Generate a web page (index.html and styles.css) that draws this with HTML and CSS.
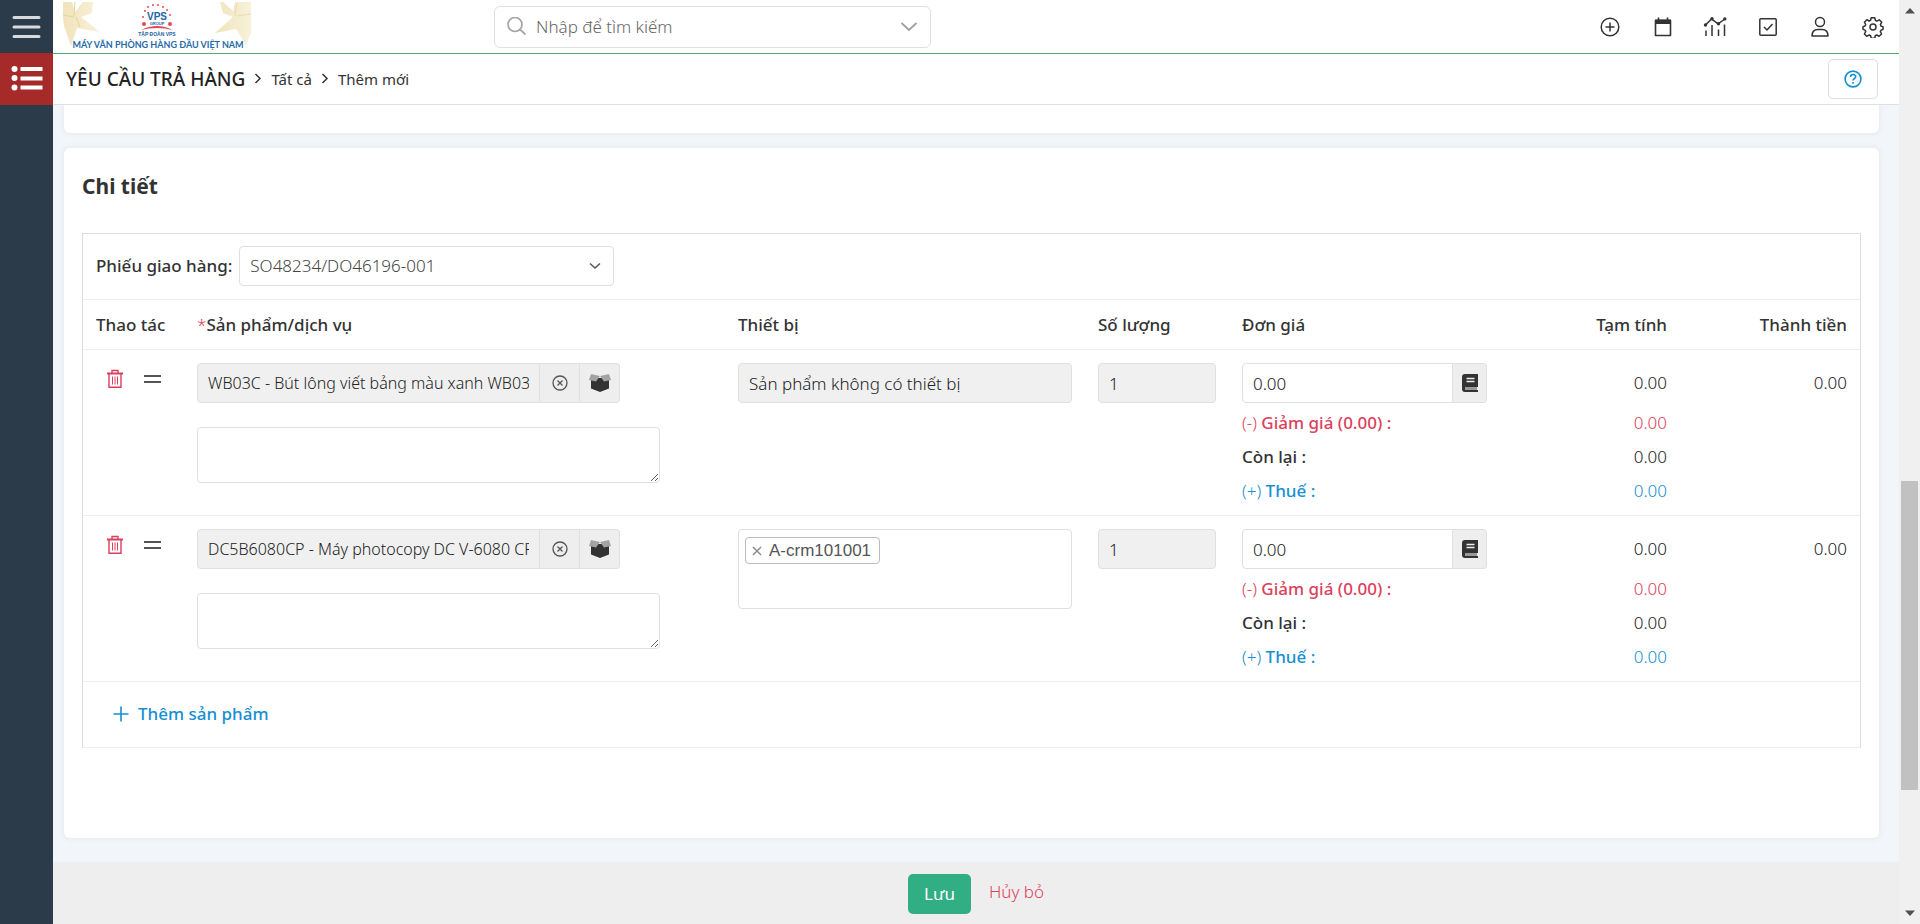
FILE: index.html
```html
<!DOCTYPE html>
<html lang="vi">
<head>
<meta charset="utf-8">
<title>Yêu cầu trả hàng</title>
<link rel="stylesheet" href="styles.css">
</head>
<body>
<div class="app">
  <nav class="sidebar" aria-label="Menu">
    <button class="side-btn" aria-label="Menu">
      <svg width="30" height="26" viewBox="0 0 30 26"><path d="M2 3.500h25M2 13h25M2 22.500h25" stroke="#d8dade" stroke-width="3" stroke-linecap="round"/></svg>
    </button>
    <button class="side-btn side-active" aria-label="Danh sách">
      <svg width="32" height="26" viewBox="0 0 32 26" fill="#fff"><circle cx="3.500" cy="3" r="3"/><circle cx="3.500" cy="12" r="3"/><circle cx="3.500" cy="21.500" r="3"/><path d="M9.500 1h22v4h-22zM9.500 10.500h22v4h-22zM9.500 19.500h22v4h-22z"/></svg>
    </button>
  </nav>

  <div class="page">
    <header class="topbar">
      <a class="logo" href="#" aria-label="VPS Group">
        <svg width="188" height="50" viewBox="0 0 188 50">
          <defs>
            <linearGradient id="petal" x1="0" y1="0" x2="1" y2="0"><stop offset="0" stop-color="#f1e3bb"/><stop offset="1" stop-color="#f8f1da"/></linearGradient>
          </defs>
          <g fill="url(#petal)">
            <path d="M0 0h9l3 10L20 0h10l-1 11-11 4 19 15-23-4-6 18-7-20-1-9z"/>
            <path d="M188 0h-16l-2 9-10-9h-3l3 11 10 4-18 16 21-4 10 16 5-12z"/>
          </g>
          <path d="M0 13l11 2M12 0l-1 14M13 15l4 10" stroke="#e4d3a0" fill="none"/>
          <path d="M188 12l-14 2M174 1l-2 13" stroke="#e9dcb2" fill="none"/>
          <g fill="#e04a55">
            <circle cx="81" cy="22" r="2"/><circle cx="80" cy="15" r="1"/><circle cx="82" cy="9" r="1"/><circle cx="85" cy="5" r="1"/><circle cx="90" cy="3" r="1"/><circle cx="95" cy="3" r="1"/><circle cx="100" cy="5" r="1"/><circle cx="104" cy="8" r="1"/><circle cx="107" cy="13" r="1"/><circle cx="107" cy="22" r="2"/>
            <path d="M78 28q16-8 32 0q-16-4-32 0z"/>
          </g>
          <text class="logo-vps" x="94" y="18" text-anchor="middle">VPS</text>
          <text class="logo-group" x="94" y="23" text-anchor="middle">GROUP</text>
          <text class="logo-sub" x="94" y="34" text-anchor="middle">TẬP ĐOÀN VPS</text>
          <text class="logo-line" x="95" y="46" text-anchor="middle">MÁY VĂN PHÒNG HÀNG ĐẦU VIỆT NAM</text>
        </svg>
      </a>
      <div class="search">
        <svg width="20" height="20" viewBox="0 0 20 20" fill="none" stroke="#a6a6a6" stroke-width="1.700"><circle cx="8" cy="7.500" r="7"/><path d="M13 12.500l5.500 5"/></svg>
        <input class="search-input" type="text" placeholder="Nhập để tìm kiếm" aria-label="Tìm kiếm">
        <svg width="18" height="10" viewBox="0 0 18 10" fill="none" stroke="#a0a0a0" stroke-width="1.800"><path d="M1.500 1L9 8l7.500-7"/></svg>
      </div>
      <div class="tools">
        <button class="tool" aria-label="Thêm"><svg width="22" height="22" viewBox="0 0 22 22" fill="none" stroke="#333" stroke-width="1.500"><circle cx="11" cy="11" r="8.800"/><path d="M11 6.500v9M6.500 11h9"/></svg></button>
        <button class="tool" aria-label="Lịch"><svg width="22" height="22" viewBox="0 0 22 22"><path d="M3.500 4.500h15v15h-15z" fill="none" stroke="#333" stroke-width="1.600" stroke-linejoin="round"/><path d="M3 3.500h16V8H3z" fill="#333"/><path d="M6.500 1.500v3M15.500 1.500v3" stroke="#333" stroke-width="1.600"/></svg></button>
        <button class="tool" aria-label="Báo cáo"><svg width="24" height="22" viewBox="0 0 24 22" fill="none" stroke="#333" stroke-width="1.500"><path d="M2 9.500L8.500 3l6.500 4.800L22 3"/><g fill="#333" stroke="none"><circle cx="2.500" cy="9" r="1.700"/><circle cx="9" cy="2.800" r="1.700"/><circle cx="15.500" cy="7.800" r="1.700"/><circle cx="21.800" cy="2.900" r="1.700"/></g><path d="M3 14.500V20M9 9v11M15.500 13.500V20M21.500 8.500V20"/></svg></button>
        <button class="tool" aria-label="Công việc"><svg width="22" height="22" viewBox="0 0 22 22" fill="none" stroke="#333" stroke-width="1.500"><rect x="2.800" y="2.800" width="16.400" height="16.400" rx="1"/><path d="M7 11l3 3 5.500-6"/></svg></button>
        <button class="tool" aria-label="Tài khoản"><svg width="22" height="22" viewBox="0 0 22 22" fill="none" stroke="#333" stroke-width="1.500"><circle cx="11" cy="6" r="4.500"/><path d="M3 20c0-4 2-6.500 6-6.500h4c4 0 6 2.500 6 6.500z" stroke-linejoin="round"/></svg></button>
        <button class="tool" aria-label="Cài đặt"><svg width="22" height="22" viewBox="0 0 22 22" fill="none" stroke="#333" stroke-width="1.500" stroke-linejoin="round"><circle cx="11" cy="11" r="3"/><path d="M9.200 1.800h3.600l.6 2.600 1.500.7 2.400-1.300 2.400 2.500-1.300 2.300.6 1.500 2 .7v2.600l-2 .8-.7 1.500 1.300 2.300-2.500 2.300-2.300-1.300-1.500.7-.6 2.500H9.300l-.7-2.500-1.500-.7-2.400 1.300-2.300-2.300 1.300-2.400-.7-1.500-2-.8v-2.600l2-.7.7-1.500-1.300-2.300 2.400-2.500 2.300 1.300 1.500-.7z"/></svg></button>
      </div>
    </header>

    <div class="crumbs">
      <h1 class="crumb-title">YÊU CẦU TRẢ HÀNG</h1>
      <svg class="sep" width="8" height="12" viewBox="0 0 8 12"><path d="M1.500 1L6 5.500 1.500 10"/></svg>
      <a class="crumb" href="#">Tất cả</a>
      <svg class="sep" width="8" height="12" viewBox="0 0 8 12"><path d="M1.500 1L6 5.500 1.500 10"/></svg>
      <a class="crumb" href="#">Thêm mới</a>
      <button class="help" aria-label="Trợ giúp"><svg width="18" height="18" viewBox="0 0 18 18" fill="none" stroke="#168fd3" stroke-width="1.600"><circle cx="9" cy="9" r="7.900"/><path d="M6.500 7c0-3.200 5.200-3.200 5.200-.3C11.700 8.600 9 8.400 9 10.600M9 12v1.800"/></svg></button>
    </div>

    <main class="content">
      <section class="card card-prev"></section>
      <section class="card card-main">
        <h2 class="card-title">Chi tiết</h2>
        <div class="detail">
          <div class="delivery">
            <label class="strong" for="delivery">Phiếu giao hàng:</label>
            <div class="select-wrap">
              <select class="field" id="delivery"><option>SO48234/DO46196-001</option></select>
              <svg class="select-arrow" width="12" height="8" viewBox="0 0 12 8"><path d="M1 1.500l5 4.500 5-4.500"/></svg>
            </div>
          </div>
          <table class="items">
            <colgroup><col class="c-act"><col class="c-prod"><col class="c-dev"><col class="c-qty"><col class="c-price"><col class="c-sub"><col class="c-sub"></colgroup>
            <thead>
              <tr><th>Thao tác</th><th><span class="req">*</span>Sản phẩm/dịch vụ</th><th>Thiết bị</th><th>Số lượng</th><th>Đơn giá</th><th class="num">Tạm tính</th><th class="num">Thành tiền</th></tr>
            </thead>
            <tbody>
              <tr>
                <td>
                  <div class="actions">
                    <button aria-label="Xóa"><svg width="16" height="20" viewBox="0 0 16 20" fill="none" stroke="#dc3f5c" stroke-width="1.400"><path d="M0 4.500h16" stroke-width="2"/><path d="M5 4V1.500h6V4M2 5v13.200h12V5"/><path d="M5.500 7.500v8M8 7.500v8M10.500 7.500v8" stroke-width="1"/></svg></button>
                    <button aria-label="Di chuyển"><svg width="17" height="10" viewBox="0 0 17 10"><path d="M0 2h17M0 8h17" stroke="#555" stroke-width="2"/></svg></button>
                  </div>
                </td>
                <td>
                  <div class="group product">
                    <input class="field small" readonly value="WB03C - Bút lông viết bảng màu xanh WB03" aria-label="Sản phẩm">
                    <button aria-label="Xóa sản phẩm"><svg width="16" height="16" viewBox="0 0 16 16" fill="none" stroke="#555" stroke-width="1.300"><circle cx="8" cy="8" r="7"/><path d="M5.500 5.500l5 5M10.500 5.500l-5 5"/></svg></button>
                    <button aria-label="Chọn sản phẩm"><svg width="22" height="18" viewBox="0 0 22 18"><path d="M2 4h18v10.500L11 18l-9-3.500z" fill="#333"/><path d="M2 0l9 2-4 5.500L0 6zM20 0l-9 2 4 5.500L22 6z" fill="#a3a3a3"/></svg></button>
                  </div>
                  <textarea class="field note" aria-label="Ghi chú"></textarea>
                </td>
                <td><input class="field full" readonly value="Sản phẩm không có thiết bị" aria-label="Thiết bị"></td>
                <td><input class="field full" readonly value="1" aria-label="Số lượng"></td>
                <td>
                  <div class="group price">
                    <input class="field" value="0.00" aria-label="Đơn giá">
                    <button aria-label="Bảng giá"><svg width="16" height="18" viewBox="0 0 16 18"><path d="M3 0h13v13H3zM3 0Q0 0 0 3v12q0 3 3 3h13v-2H3z" fill="#333"/><path d="M3 13h12v3H3z" fill="#999"/><path d="M4.500 4.500h8M4.500 7.500h8" stroke="#eee" stroke-width="1.300"/></svg></button>
                  </div>
                  <div class="lines">
                    <div class="red">(-) <b>Giảm giá (0.00) :</b></div><div><b>Còn lại :</b></div><div class="blue">(+) <b>Thuế :</b></div>
                  </div>
                </td>
                <td class="num"><div class="amount">0.00</div><div class="lines"><div class="red">0.00</div><div>0.00</div><div class="blue">0.00</div></div></td>
                <td class="num"><div class="amount">0.00</div></td>
              </tr>
              <tr>
                <td>
                  <div class="actions">
                    <button aria-label="Xóa"><svg width="16" height="20" viewBox="0 0 16 20" fill="none" stroke="#dc3f5c" stroke-width="1.400"><path d="M0 4.500h16" stroke-width="2"/><path d="M5 4V1.500h6V4M2 5v13.200h12V5"/><path d="M5.500 7.500v8M8 7.500v8M10.500 7.500v8" stroke-width="1"/></svg></button>
                    <button aria-label="Di chuyển"><svg width="17" height="10" viewBox="0 0 17 10"><path d="M0 2h17M0 8h17" stroke="#555" stroke-width="2"/></svg></button>
                  </div>
                </td>
                <td>
                  <div class="group product">
                    <input class="field small" readonly value="DC5B6080CP - Máy photocopy DC V-6080 CP" aria-label="Sản phẩm">
                    <button aria-label="Xóa sản phẩm"><svg width="16" height="16" viewBox="0 0 16 16" fill="none" stroke="#555" stroke-width="1.300"><circle cx="8" cy="8" r="7"/><path d="M5.500 5.500l5 5M10.500 5.500l-5 5"/></svg></button>
                    <button aria-label="Chọn sản phẩm"><svg width="22" height="18" viewBox="0 0 22 18"><path d="M2 4h18v10.500L11 18l-9-3.500z" fill="#333"/><path d="M2 0l9 2-4 5.500L0 6zM20 0l-9 2 4 5.500L22 6z" fill="#a3a3a3"/></svg></button>
                  </div>
                  <textarea class="field note" aria-label="Ghi chú"></textarea>
                </td>
                <td><div class="tags"><span class="tag"><button aria-label="Bỏ A-crm101001"><svg width="10" height="10" viewBox="0 0 10 10"><path d="M1 1l8 8M9 1L1 9" stroke="#888" stroke-width="1.400"/></svg></button>A-crm101001</span></div></td>
                <td><input class="field full" readonly value="1" aria-label="Số lượng"></td>
                <td>
                  <div class="group price">
                    <input class="field" value="0.00" aria-label="Đơn giá">
                    <button aria-label="Bảng giá"><svg width="16" height="18" viewBox="0 0 16 18"><path d="M3 0h13v13H3zM3 0Q0 0 0 3v12q0 3 3 3h13v-2H3z" fill="#333"/><path d="M3 13h12v3H3z" fill="#999"/><path d="M4.500 4.500h8M4.500 7.500h8" stroke="#eee" stroke-width="1.300"/></svg></button>
                  </div>
                  <div class="lines">
                    <div class="red">(-) <b>Giảm giá (0.00) :</b></div><div><b>Còn lại :</b></div><div class="blue">(+) <b>Thuế :</b></div>
                  </div>
                </td>
                <td class="num"><div class="amount">0.00</div><div class="lines"><div class="red">0.00</div><div>0.00</div><div class="blue">0.00</div></div></td>
                <td class="num"><div class="amount">0.00</div></td>
              </tr>
            </tbody>
          </table>
          <div class="add-row">
            <button class="add"><svg width="16" height="16" viewBox="0 0 16 16"><path d="M8 0.500v15M0.500 8h15" stroke="#168fd3" stroke-width="1.600"/></svg>Thêm sản phẩm</button>
          </div>
        </div>
      </section>
    </main>

    <footer class="footer">
      <button class="save">Lưu</button>
      <a class="cancel" href="#">Hủy bỏ</a>
    </footer>
  </div>

  <div class="scrollbar" aria-hidden="true">
    <svg width="10" height="6" viewBox="0 0 10 6"><path d="M0 5.500L5 0l5 5.500z" fill="#505050"/></svg>
    <div class="track"><div class="thumb"></div></div>
    <svg width="10" height="6" viewBox="0 0 10 6"><path d="M0 .5L5 6l5-5.500z" fill="#505050"/></svg>
  </div>
</div>
</body>
</html>
```
FILE: styles.css
```css
* { box-sizing: border-box; }

body {
  margin: 0;
  font-family: "Noto Sans", "Open Sans", sans-serif;
  font-size: 17px;
  font-weight: 300;
  line-height: 24px;
  color: #222;
  background: #f2f6fa;
}

button, input, select, textarea { font: inherit; color: inherit; }
button { margin: 0; padding: 0; border: 0; background: none; display: flex; align-items: center; justify-content: center; }
a { text-decoration: none; color: inherit; }
svg { display: block; flex: none; }
h1, h2 { margin: 0; }
b, th, .strong { font-weight: 500; color: #333; }

.app { display: flex; height: 100vh; overflow: hidden; }

.sidebar { width: 53px; flex: none; background: #2c3b49; }
.side-btn { width: 100%; height: 53px; }
.side-active { height: 52px; background: #a52a2a; }

.page { flex: 1; min-width: 0; display: flex; flex-direction: column; }

.topbar {
  display: grid;
  grid-template-columns: 441px minmax(0, 437px) 1fr;
  align-items: center;
  height: 54px;
  flex: none;
  background: #fff;
  border-bottom: 1px solid #4caf78;
}
.logo { padding-left: 10px; }
.logo-vps { font: bold 10px "Liberation Sans", sans-serif; fill: #1d63a5; }
.logo-group { font: bold 4px "Liberation Sans", sans-serif; fill: #1d63a5; }
.logo-sub { font: bold 5px "Liberation Sans", sans-serif; fill: #1d63a5; }
.logo-line { font: bold 9px "Lato", sans-serif; fill: #1f6ba8; }

.search {
  display: flex;
  align-items: center;
  gap: 9px;
  height: 42px;
  padding: 0 12px;
  border: 1px solid #e0e0e0;
  border-radius: 6px;
}
.search-input { flex: 1; min-width: 0; padding: 0; border: 0; outline: 0; background: none; }
.search-input::placeholder { color: #666; opacity: 1; }

.tools { display: flex; justify-content: space-between; justify-self: end; width: 287px; margin-right: 14px; }
.tool { width: 24px; height: 24px; }

.crumbs {
  display: flex;
  align-items: center;
  gap: 9px;
  height: 51px;
  flex: none;
  padding: 0 21px 0 13px;
  background: #fff;
  border-bottom: 1px solid #e0e0e0;
}
.crumb-title { font-size: 19px; font-weight: 500; color: #222; }
.crumb { font-size: 15px; font-weight: 400; color: #333; }
.sep { fill: none; stroke: #333; stroke-width: 1.5; }
.help { width: 50px; height: 40px; margin-left: auto; border: 1px solid #ddd; border-radius: 5px; }

.content { flex: 1; min-height: 0; overflow: hidden; padding: 0 20px 24px 11px; }
.card { background: #fff; border-radius: 6px; box-shadow: 0 0 4px 2px #e9ecef; }
.card-prev { height: 28px; margin-bottom: 15px; border-radius: 0 0 6px 6px; }
.card-main { padding: 24px 18px 90px 18px; }
.card-title { font-size: 21px; line-height: 28px; font-weight: 700; margin-bottom: 33px; color: #333; }

.detail { border: 1px solid #ddd; border-bottom-color: #eee; }
.delivery { display: flex; align-items: center; gap: 7px; padding: 12px 13px 13px; }

.field {
  height: 40px;
  padding: 0 10px;
  border: 1px solid #e0e0e0;
  border-radius: 4px;
  background: #fff;
  outline: 0;
  display: block;
}
.field[readonly] { background: #f0f0f0; }
.full { width: 100%; }
.small { font-size: 16px; }

.select-wrap { position: relative; width: 375px; }
.select-wrap select { width: 100%; appearance: none; color: #444; }
.select-arrow { position: absolute; right: 13px; top: 16px; fill: none; stroke: #555; stroke-width: 1.500; pointer-events: none; }

.items { width: 100%; table-layout: fixed; border-spacing: 0; }
.c-act { width: 101px; }
.c-qty { width: 144px; }
.c-dev { width: 360px; }
.c-price { width: 271px; }
.c-sub { width: 180px; }
.items th { height: 51px; padding: 0 13px; text-align: left; border-top: 1px solid #eee; border-bottom: 1px solid #eee; }
.items td { padding: 13px 13px 7px; vertical-align: top; border-bottom: 1px solid #eee; }
.items th.num, .items td.num { text-align: right; }
.req, .red, .red b { color: #dc3f5c; }
.req { font-weight: 300; }
.blue, .blue b { color: #168fd3; }

.actions { display: flex; align-items: center; gap: 21px; padding: 6px 0 0 11px; }

.group { display: flex; }
.group .field { flex: 1; min-width: 0; border-radius: 4px 0 0 4px; }
.group button { width: 40px; border: 1px solid #e0e0e0; border-left: 0; background: #eee; }
.group button:last-child { border-radius: 0 4px 4px 0; }
.product { max-width: 423px; }
.price button { width: 34px; }

.note { width: 100%; max-width: 463px; height: 56px; margin-top: 24px; }

.lines { padding-top: 3px; }
.lines div { height: 34px; line-height: 34px; }
.amount { line-height: 40px; }

.tags { height: 80px; padding: 7px 6px; border: 1px solid #e0e0e0; border-radius: 4px; }
.tag {
  display: inline-flex;
  align-items: center;
  gap: 7px;
  height: 27px;
  padding: 0 8px 0 6px;
  border: 1px solid #bbb;
  border-radius: 4px;
  font-family: "Liberation Sans", sans-serif;
  font-size: 17px;
  color: #555;
}

.add-row { padding: 20px 30px 21px; }
.add { gap: 9px; color: #168fd3; font-weight: 500; }

.footer { display: flex; justify-content: center; align-items: flex-start; gap: 18px; height: 62px; flex: none; padding-top: 12px; background: #eee; }
.save { width: 63px; height: 40px; border-radius: 5px; background: #32ae84; color: #fff; font-weight: 400; }
.cancel { line-height: 36px; color: #dc3f5c; }

.scrollbar { width: 21px; flex: none; display: flex; flex-direction: column; align-items: center; padding: 8px 0; background: #f0f0f0; }
.track { flex: 1; width: 17px; display: flex; flex-direction: column; padding: 467px 0 0; }
.thumb { height: 309px; background: #c1c1c1; }
```
